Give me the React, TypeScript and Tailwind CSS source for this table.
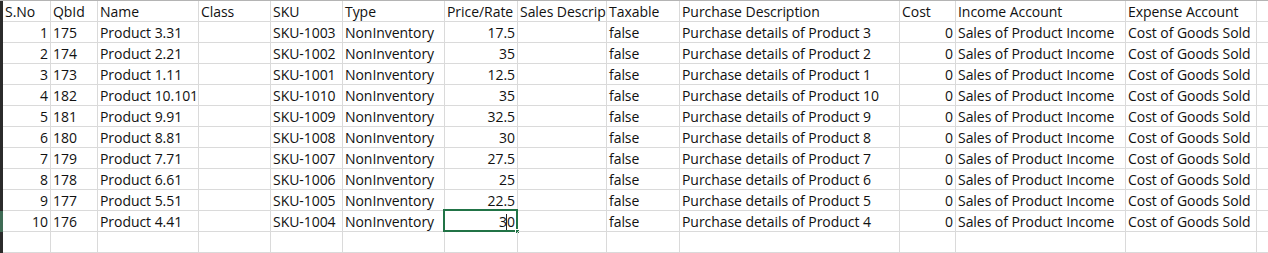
import React from "react";

type Align = "l" | "r";

const COLUMNS: { label: string; w: number; align: Align }[] = [
  { label: "S.No", w: 48, align: "r" },
  { label: "QbId", w: 47, align: "l" },
  { label: "Name", w: 101, align: "l" },
  { label: "Class", w: 72, align: "l" },
  { label: "SKU", w: 72, align: "l" },
  { label: "Type", w: 102, align: "l" },
  { label: "Price/Rate", w: 73, align: "r" },
  { label: "Sales Descrip", w: 89, align: "l" },
  { label: "Taxable", w: 73, align: "l" },
  { label: "Purchase Description", w: 220, align: "l" },
  { label: "Cost", w: 56, align: "r" },
  { label: "Income Account", w: 170, align: "l" },
  { label: "Expense Account", w: 131, align: "l" },
];

const PRODUCTS = [
  { qb: "175", name: "Product 3.31", sku: "SKU-1003", price: "17.5", n: 3 },
  { qb: "174", name: "Product 2.21", sku: "SKU-1002", price: "35", n: 2 },
  { qb: "173", name: "Product 1.11", sku: "SKU-1001", price: "12.5", n: 1 },
  { qb: "182", name: "Product 10.101", sku: "SKU-1010", price: "35", n: 10 },
  { qb: "181", name: "Product 9.91", sku: "SKU-1009", price: "32.5", n: 9 },
  { qb: "180", name: "Product 8.81", sku: "SKU-1008", price: "30", n: 8 },
  { qb: "179", name: "Product 7.71", sku: "SKU-1007", price: "27.5", n: 7 },
  { qb: "178", name: "Product 6.61", sku: "SKU-1006", price: "25", n: 6 },
  { qb: "177", name: "Product 5.51", sku: "SKU-1005", price: "22.5", n: 5 },
  { qb: "176", name: "Product 4.41", sku: "SKU-1004", price: "30", n: 4 },
];

const rows: string[][] = PRODUCTS.map((p, i) => [
  String(i + 1),
  p.qb,
  p.name,
  "",
  p.sku,
  "NonInventory",
  p.price,
  "",
  "false",
  `Purchase details of Product ${p.n}`,
  "0",
  "Sales of Product Income",
  "Cost of Goods Sold",
]);

// text spills into the next column unless that column is filled (like Excel)
const Cell = ({
  text,
  w,
  align,
  clip,
  children,
}: {
  text: string;
  w: number;
  align: Align;
  clip: boolean;
  children?: React.ReactNode;
}) => (
  <div
    className={clsxLike(
      "relative flex h-[21px] shrink-0 items-center border-r border-b border-[#dadada] pt-[1px] whitespace-nowrap",
      align === "r" ? "justify-end pr-[2px]" : "justify-start pl-[2px]",
      clip ? "overflow-hidden" : "overflow-visible",
    )}
    style={{ width: w }}
  >
    {text}
    {children}
  </div>
);

function clsxLike(...parts: string[]) {
  return parts.join(" ");
}

const App = () => {
  const allRows = [COLUMNS.map((c) => c.label), ...rows, COLUMNS.map(() => "")];

  return (
    <div className="h-[253px] w-[1268px] overflow-hidden border-t border-[#b4b4b4] bg-white font-['Open_Sans',sans-serif] text-[14px] leading-[20px] tracking-[-0.05px] text-[#111]">
      {allRows.map((row, r) => {
        const isHeader = r === 0;
        const isSelectedRow = r === 10;
        return (
          <div key={r} className="flex">
            <div
              className={
                isSelectedRow
                  ? "h-[21px] w-[3px] shrink-0 bg-[#3f6b55]"
                  : "h-[21px] w-[3px] shrink-0 bg-[#2b2b2b]"
              }
            />
            {row.map((text, c) => {
              const col = COLUMNS[c];
              const align = isHeader ? "l" : col.align;
              const selected = isSelectedRow && c === 6;
              const nextFilled = c + 1 < row.length && row[c + 1] !== "";
              return (
                <Cell
                  key={c}
                  text={text}
                  w={col.w}
                  align={align}
                  clip={align === "l" && nextFilled}
                >
                  {selected && (
                    <>
                      <span className="absolute top-[3px] right-[10px] h-[17px] w-px bg-[#222]" />
                      <span className="pointer-events-none absolute -top-[2px] -left-[2px] h-[23px] w-[75px] border-2 border-[#217346]" />
                      <span className="absolute -right-[3px] -bottom-[3px] h-[5px] w-[5px] border border-white bg-[#217346]" />
                    </>
                  )}
                </Cell>
              );
            })}
            <div className="h-[21px] flex-1 border-b border-[#dadada]" />
          </div>
        );
      })}
    </div>
  );
};

export default App;
